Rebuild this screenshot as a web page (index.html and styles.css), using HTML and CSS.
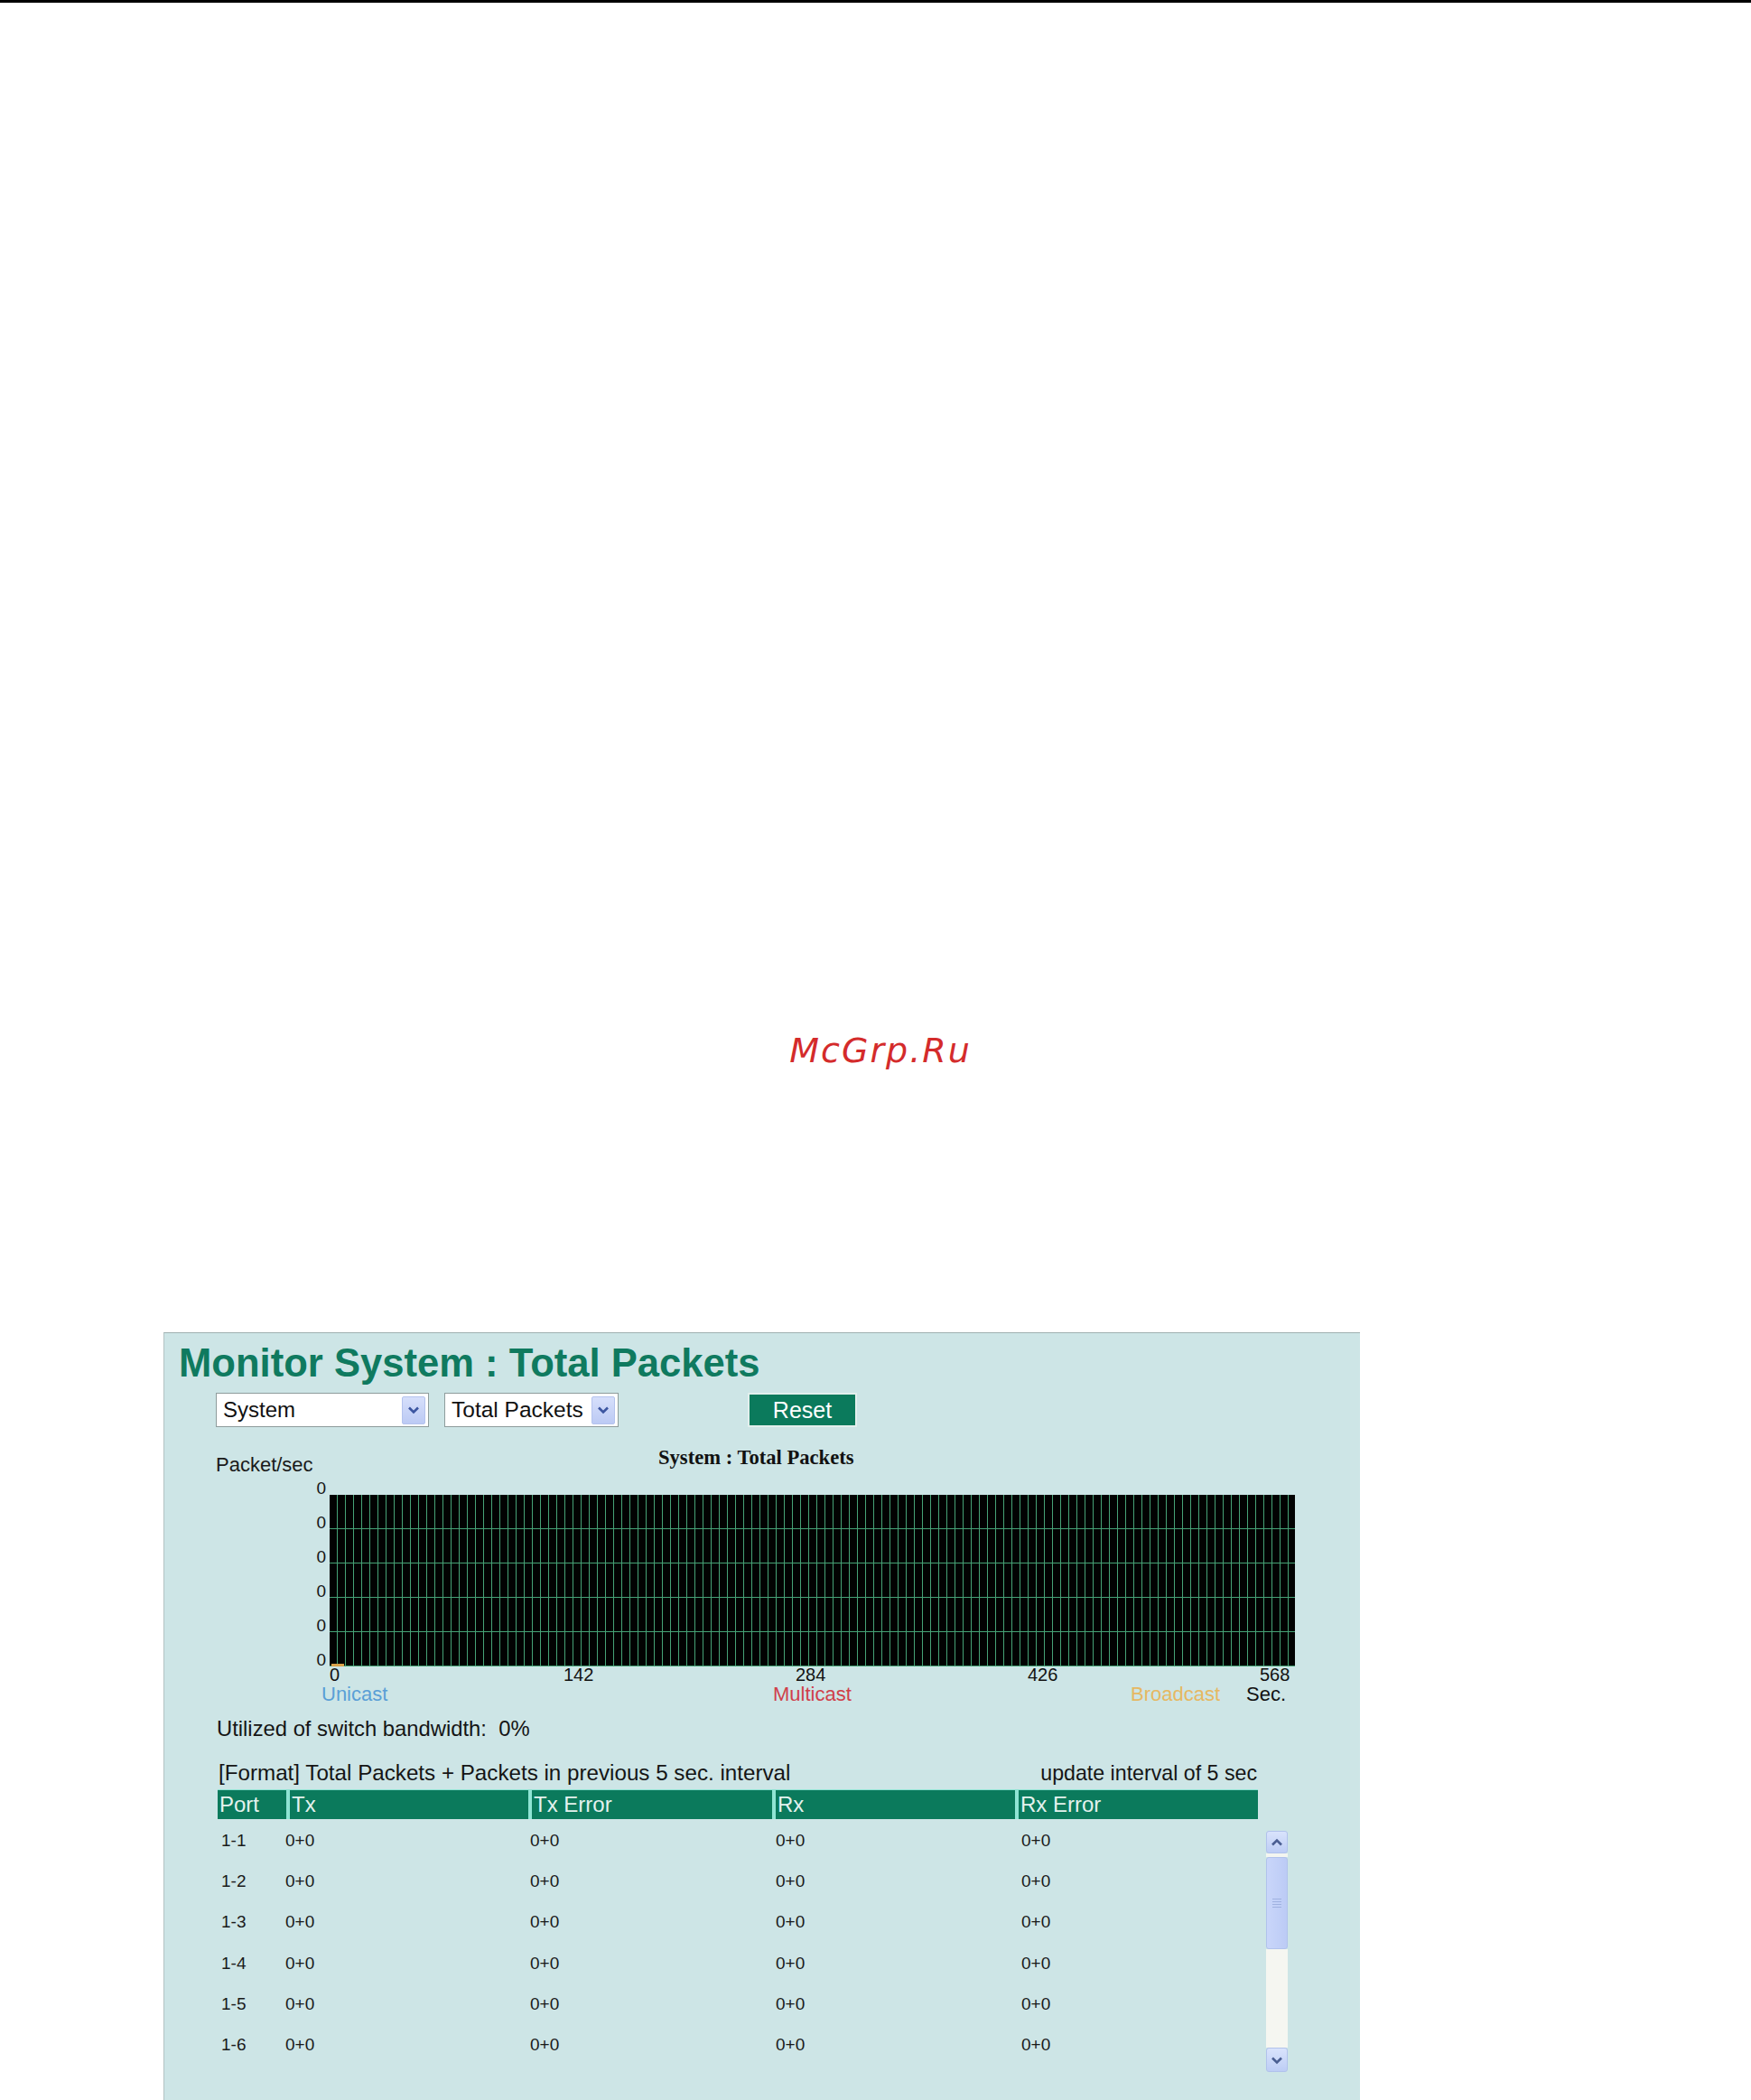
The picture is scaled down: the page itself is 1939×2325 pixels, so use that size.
FILE: index.html
```html
<!DOCTYPE html>
<html>
<head>
<meta charset="utf-8">
<title>Monitor System : Total Packets</title>
<link rel="stylesheet" href="styles.css">
</head>
<body>
<div class="topline"></div>
<div class="watermark">McGrp.Ru</div>
<div class="panel">
  <h1 class="title">Monitor System : Total Packets</h1>
  <div class="controls">
    <div class="select sel-system">
      <span class="sel-text">System</span>
      <span class="sel-btn"><svg width="14" height="10" viewBox="0 0 14 10"><path d="M2 2.5 L7 7.5 L12 2.5" fill="none" stroke="#3b55a0" stroke-width="2.6"/></svg></span>
    </div>
    <div class="select sel-type">
      <span class="sel-text">Total Packets</span>
      <span class="sel-btn"><svg width="14" height="10" viewBox="0 0 14 10"><path d="M2 2.5 L7 7.5 L12 2.5" fill="none" stroke="#3b55a0" stroke-width="2.6"/></svg></span>
    </div>
    <div class="reset">Reset</div>
  </div>
  <div class="chart-head">
    <span class="yunit">Packet/sec</span>
    <span class="chart-title">System : Total Packets</span>
  </div>
  <div class="chart-row">
    <div class="yaxis"><span>0</span><span>0</span><span>0</span><span>0</span><span>0</span><span>0</span></div>
    <div class="plot"><span class="bmark"></span></div>
  </div>
  <div class="xaxis"><span>0</span><span>142</span><span>284</span><span>426</span><span>568</span></div>
  <div class="legend"><span class="uni">Unicast</span><span class="multi">Multicast</span><span class="broad">Broadcast</span><span class="sec">Sec.</span></div>
  <div class="util">Utilized of switch bandwidth:&nbsp; 0%</div>
  <div class="format"><span class="fmt-left">[Format] Total Packets + Packets in previous 5 sec. interval</span><span class="fmt-right">update interval of 5 sec</span></div>
  <div class="thead">
    <div class="th c-port">Port</div>
    <div class="th c-tx">Tx</div>
    <div class="th c-txe">Tx Error</div>
    <div class="th c-rx">Rx</div>
    <div class="th c-rxe">Rx Error</div>
  </div>
  <div class="tbody">
    <div class="rows">
      <div class="row"><span>1-1</span><span>0+0</span><span>0+0</span><span>0+0</span><span>0+0</span></div>
      <div class="row"><span>1-2</span><span>0+0</span><span>0+0</span><span>0+0</span><span>0+0</span></div>
      <div class="row"><span>1-3</span><span>0+0</span><span>0+0</span><span>0+0</span><span>0+0</span></div>
      <div class="row"><span>1-4</span><span>0+0</span><span>0+0</span><span>0+0</span><span>0+0</span></div>
      <div class="row"><span>1-5</span><span>0+0</span><span>0+0</span><span>0+0</span><span>0+0</span></div>
      <div class="row"><span>1-6</span><span>0+0</span><span>0+0</span><span>0+0</span><span>0+0</span></div>
    </div>
    <div class="scrollbar">
      <div class="sb-btn sb-up"><svg width="14" height="10" viewBox="0 0 14 10"><path d="M2 7.5 L7 2.5 L12 7.5" fill="none" stroke="#4a5e92" stroke-width="2.6"/></svg></div>
      <div class="sb-gap"></div>
      <div class="sb-thumb"><span class="grip"></span><span class="grip"></span><span class="grip"></span><span class="grip"></span></div>
      <div class="sb-track"></div>
      <div class="sb-btn sb-down"><svg width="14" height="10" viewBox="0 0 14 10"><path d="M2 2.5 L7 7.5 L12 2.5" fill="none" stroke="#4a5e92" stroke-width="2.6"/></svg></div>
    </div>
  </div>
</div>
</body>
</html>
```

FILE: styles.css
```css
html, body {
  margin: 0;
  padding: 0;
  background: #ffffff;
  overflow: hidden;
}
body {
  font-family: "Liberation Sans", Arial, sans-serif;
  color: #151515;
  width: 1939px;
  height: 2325px;
}
.topline {
  height: 3px;
  background: #000;
}
.watermark {
  margin-top: 1139px;
  padding-left: 11px;
  text-align: center;
  font-family: "DejaVu Sans", sans-serif;
  font-style: oblique;
  font-size: 38px;
  line-height: 42px;
  letter-spacing: 2px;
  color: #d42b2b;
}
.panel {
  margin: 291px 0 0 181px;
  width: 1325px;
  height: 850px;
  box-sizing: border-box;
  background: #cde5e6;
  border-top: 1px solid #9fb0b0;
  border-left: 1px solid #b3c3c3;
  padding-top: 8px;
  overflow: hidden;
}
.title {
  margin: 0 0 0 16px;
  font-size: 43.6px;
  line-height: 50px;
  font-weight: bold;
  color: #0f7a5f;
  white-space: nowrap;
}
.controls {
  display: flex;
  align-items: center;
  height: 38px;
  margin: 8px 0 0 57px;
}
.select {
  height: 38px;
  box-sizing: border-box;
  background: #fff;
  border: 1px solid #8e9c9c;
  display: flex;
  align-items: center;
  justify-content: space-between;
  padding: 0 3px 0 7px;
}
.sel-system { width: 236px; }
.sel-type { width: 193px; margin-left: 17px; padding-left: 7px; }
.sel-text {
  font-size: 24px;
  color: #111;
  white-space: nowrap;
}
.sel-type .sel-text { font-size: 24.5px; }
.sel-btn {
  width: 26px;
  height: 31px;
  box-sizing: border-box;
  border: 1px solid #b4c3ee;
  border-radius: 2px;
  background: linear-gradient(to bottom, #d6dffb, #bccaf4);
  display: flex;
  align-items: center;
  justify-content: center;
  flex-shrink: 0;
}
.reset {
  margin-left: 145px;
  width: 117px;
  height: 34px;
  background: #0b7a5c;
  box-shadow: 0 0 0 2px #e2efed;
  color: #fff;
  font-size: 25px;
  line-height: 34px;
  text-align: center;
}
.chart-head {
  display: flex;
  align-items: flex-start;
  height: 28px;
  margin-top: 21px;
  padding-left: 57px;
}
.yunit {
  width: 490px;
  margin-top: 8px;
  font-size: 22px;
  line-height: 25px;
  color: #1a1a1a;
}
.chart-title {
  font-family: "Liberation Serif", "Times New Roman", serif;
  font-weight: bold;
  font-size: 22.6px;
  line-height: 25px;
  color: #111;
}
.chart-row {
  display: flex;
  height: 214px;
  padding-left: 57px;
}
.yaxis {
  width: 122px;
  text-align: right;
  font-size: 19px;
}
.yaxis span {
  display: block;
  height: 38px;
  line-height: 38px;
}
.plot {
  position: relative;
  margin: 26px 0 0 4px;
  width: 1069px;
  height: 190px;
  background:
    repeating-linear-gradient(to bottom, transparent 0 37px, #46a276 37px 38px),
    repeating-linear-gradient(to right, transparent 0 8px, #46a276 8px 9px),
    #020202;
}
.bmark {
  position: absolute;
  left: 2px;
  bottom: 0;
  width: 14px;
  height: 3px;
  background: #d9a24a;
}
.xaxis {
  display: grid;
  grid-template-columns: 259px 257px 257px 257px auto;
  margin-left: 183px;
  height: 22px;
  font-size: 20px;
  line-height: 22px;
  color: #111;
}
.legend {
  display: grid;
  grid-template-columns: 500px 396px 128px auto;
  margin-left: 174px;
  height: 21px;
  font-size: 22px;
  line-height: 21px;
}
.uni { color: #5a9fd6; }
.multi { color: #d0404a; }
.broad { color: #e6b862; }
.sec { color: #111; }
.util {
  margin: 15px 0 0 58px;
  font-size: 23.8px;
  line-height: 26px;
  color: #151515;
}
.format {
  display: flex;
  justify-content: space-between;
  align-items: baseline;
  width: 1150px;
  margin: 23px 0 0 60px;
  line-height: 26px;
  color: #151515;
}
.fmt-left { font-size: 24.2px; }
.fmt-right { font-size: 23.2px; }
.thead {
  display: flex;
  gap: 4px;
  width: 1152px;
  margin: 5px 0 0 59px;
  padding-top: 1px;
  background: #90e4d4;
}
.th {
  height: 32px;
  line-height: 32px;
  background: #0b7a5c;
  color: #e4f2ee;
  font-size: 24px;
  padding-left: 2px;
  box-sizing: border-box;
  white-space: nowrap;
}
.c-port { width: 76px; }
.c-tx { width: 264px; }
.c-txe { width: 266px; }
.c-rx { width: 265px; }
.c-rxe { width: 265px; }
.tbody {
  display: flex;
  margin-left: 59px;
}
.rows {
  width: 1161px;
  margin-top: 1px;
}
.row {
  display: grid;
  grid-template-columns: 71px 271px 272px 272px 1fr;
  padding-left: 4px;
  height: 45.2px;
  line-height: 45px;
  font-size: 19px;
  color: #1a1a1a;
}
.scrollbar {
  width: 24px;
  height: 267px;
  margin-top: 13px;
  display: flex;
  flex-direction: column;
}
.sb-btn {
  box-sizing: border-box;
  border: 1px solid #b1c2ec;
  border-radius: 3px;
  background: linear-gradient(to bottom, #d9e3fc, #bdcdf5);
  display: flex;
  align-items: center;
  justify-content: center;
}
.sb-up { height: 25px; }
.sb-down { height: 27px; }
.sb-gap {
  height: 4px;
  background: #f3f5f0;
}
.sb-thumb {
  height: 102px;
  box-sizing: border-box;
  border: 1px solid #b1c2ec;
  border-radius: 3px;
  background: linear-gradient(to right, #c9d6fa, #bccbf5);
  display: flex;
  flex-direction: column;
  align-items: center;
  justify-content: center;
  gap: 2px;
}
.grip {
  display: block;
  width: 10px;
  height: 1px;
  background: #9fb1e0;
}
.sb-track {
  flex: 1;
  background: #f5f6f1;
}
```
